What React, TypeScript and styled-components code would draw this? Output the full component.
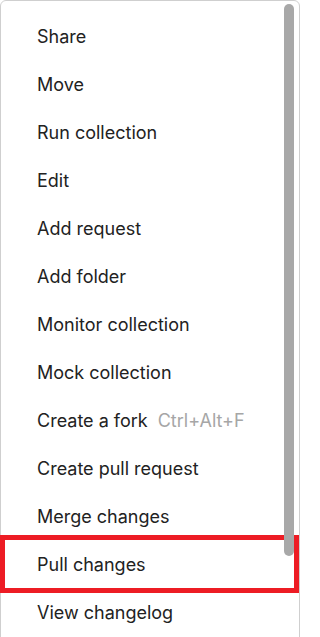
import React from "react";
import styled, { createGlobalStyle } from "styled-components";

const GlobalStyle = createGlobalStyle`
  html, body {
    margin: 0;
    padding: 0;
    background: #ffffff;
  }
  body {
    font-family: Inter, "Noto Sans", sans-serif;
  }
`;

const Page = styled.div`
  width: 303px;
  height: 637px;
  overflow: hidden;
  background: #ffffff;
`;

const MenuPanel = styled.div`
  position: relative;
  width: 300px;
  height: 660px;
  box-sizing: border-box;
  border: 1px solid #cfcfcf;
  border-radius: 6px 6px 0 0;
  background: #ffffff;
  padding: 11px 0 0;
`;

const MenuList = styled.ul`
  list-style: none;
  margin: 0;
  padding: 0;
  display: flex;
  flex-direction: column;
`;

const MenuItem = styled.li`
  position: relative;
  height: 48px;
  display: flex;
  align-items: center;
  gap: 10px;
  padding-left: 36px;
  font-size: 18px;
  color: #222222;
  cursor: pointer;
`;

const Shortcut = styled.span`
  color: #a6a6a6;
`;

const Highlight = styled.div`
  position: absolute;
  left: -1px;
  right: 0;
  top: -5px;
  bottom: -5px;
  border: 5px solid #ed1c24;
  pointer-events: none;
`;

const ScrollThumb = styled.div`
  position: absolute;
  top: 3px;
  right: 5px;
  width: 10px;
  height: 552px;
  border-radius: 5px;
  background: #a8a8a8;
`;

const items: { label: string; shortcut?: string }[] = [
  { label: "Share" },
  { label: "Move" },
  { label: "Run collection" },
  { label: "Edit" },
  { label: "Add request" },
  { label: "Add folder" },
  { label: "Monitor collection" },
  { label: "Mock collection" },
  { label: "Create a fork", shortcut: "Ctrl+Alt+F" },
  { label: "Create pull request" },
  { label: "Merge changes" },
  { label: "Pull changes" },
  { label: "View changelog" },
];

const App: React.FC = () => {
  return (
    <>
      <GlobalStyle />
      <Page>
        <MenuPanel>
          <MenuList>
            {items.map((item) => (
              <MenuItem key={item.label}>
                <span>{item.label}</span>
                {item.shortcut && <Shortcut>{item.shortcut}</Shortcut>}
                {item.label === "Pull changes" && <Highlight />}
              </MenuItem>
            ))}
          </MenuList>
          <ScrollThumb />
        </MenuPanel>
      </Page>
    </>
  );
};

export default App;
